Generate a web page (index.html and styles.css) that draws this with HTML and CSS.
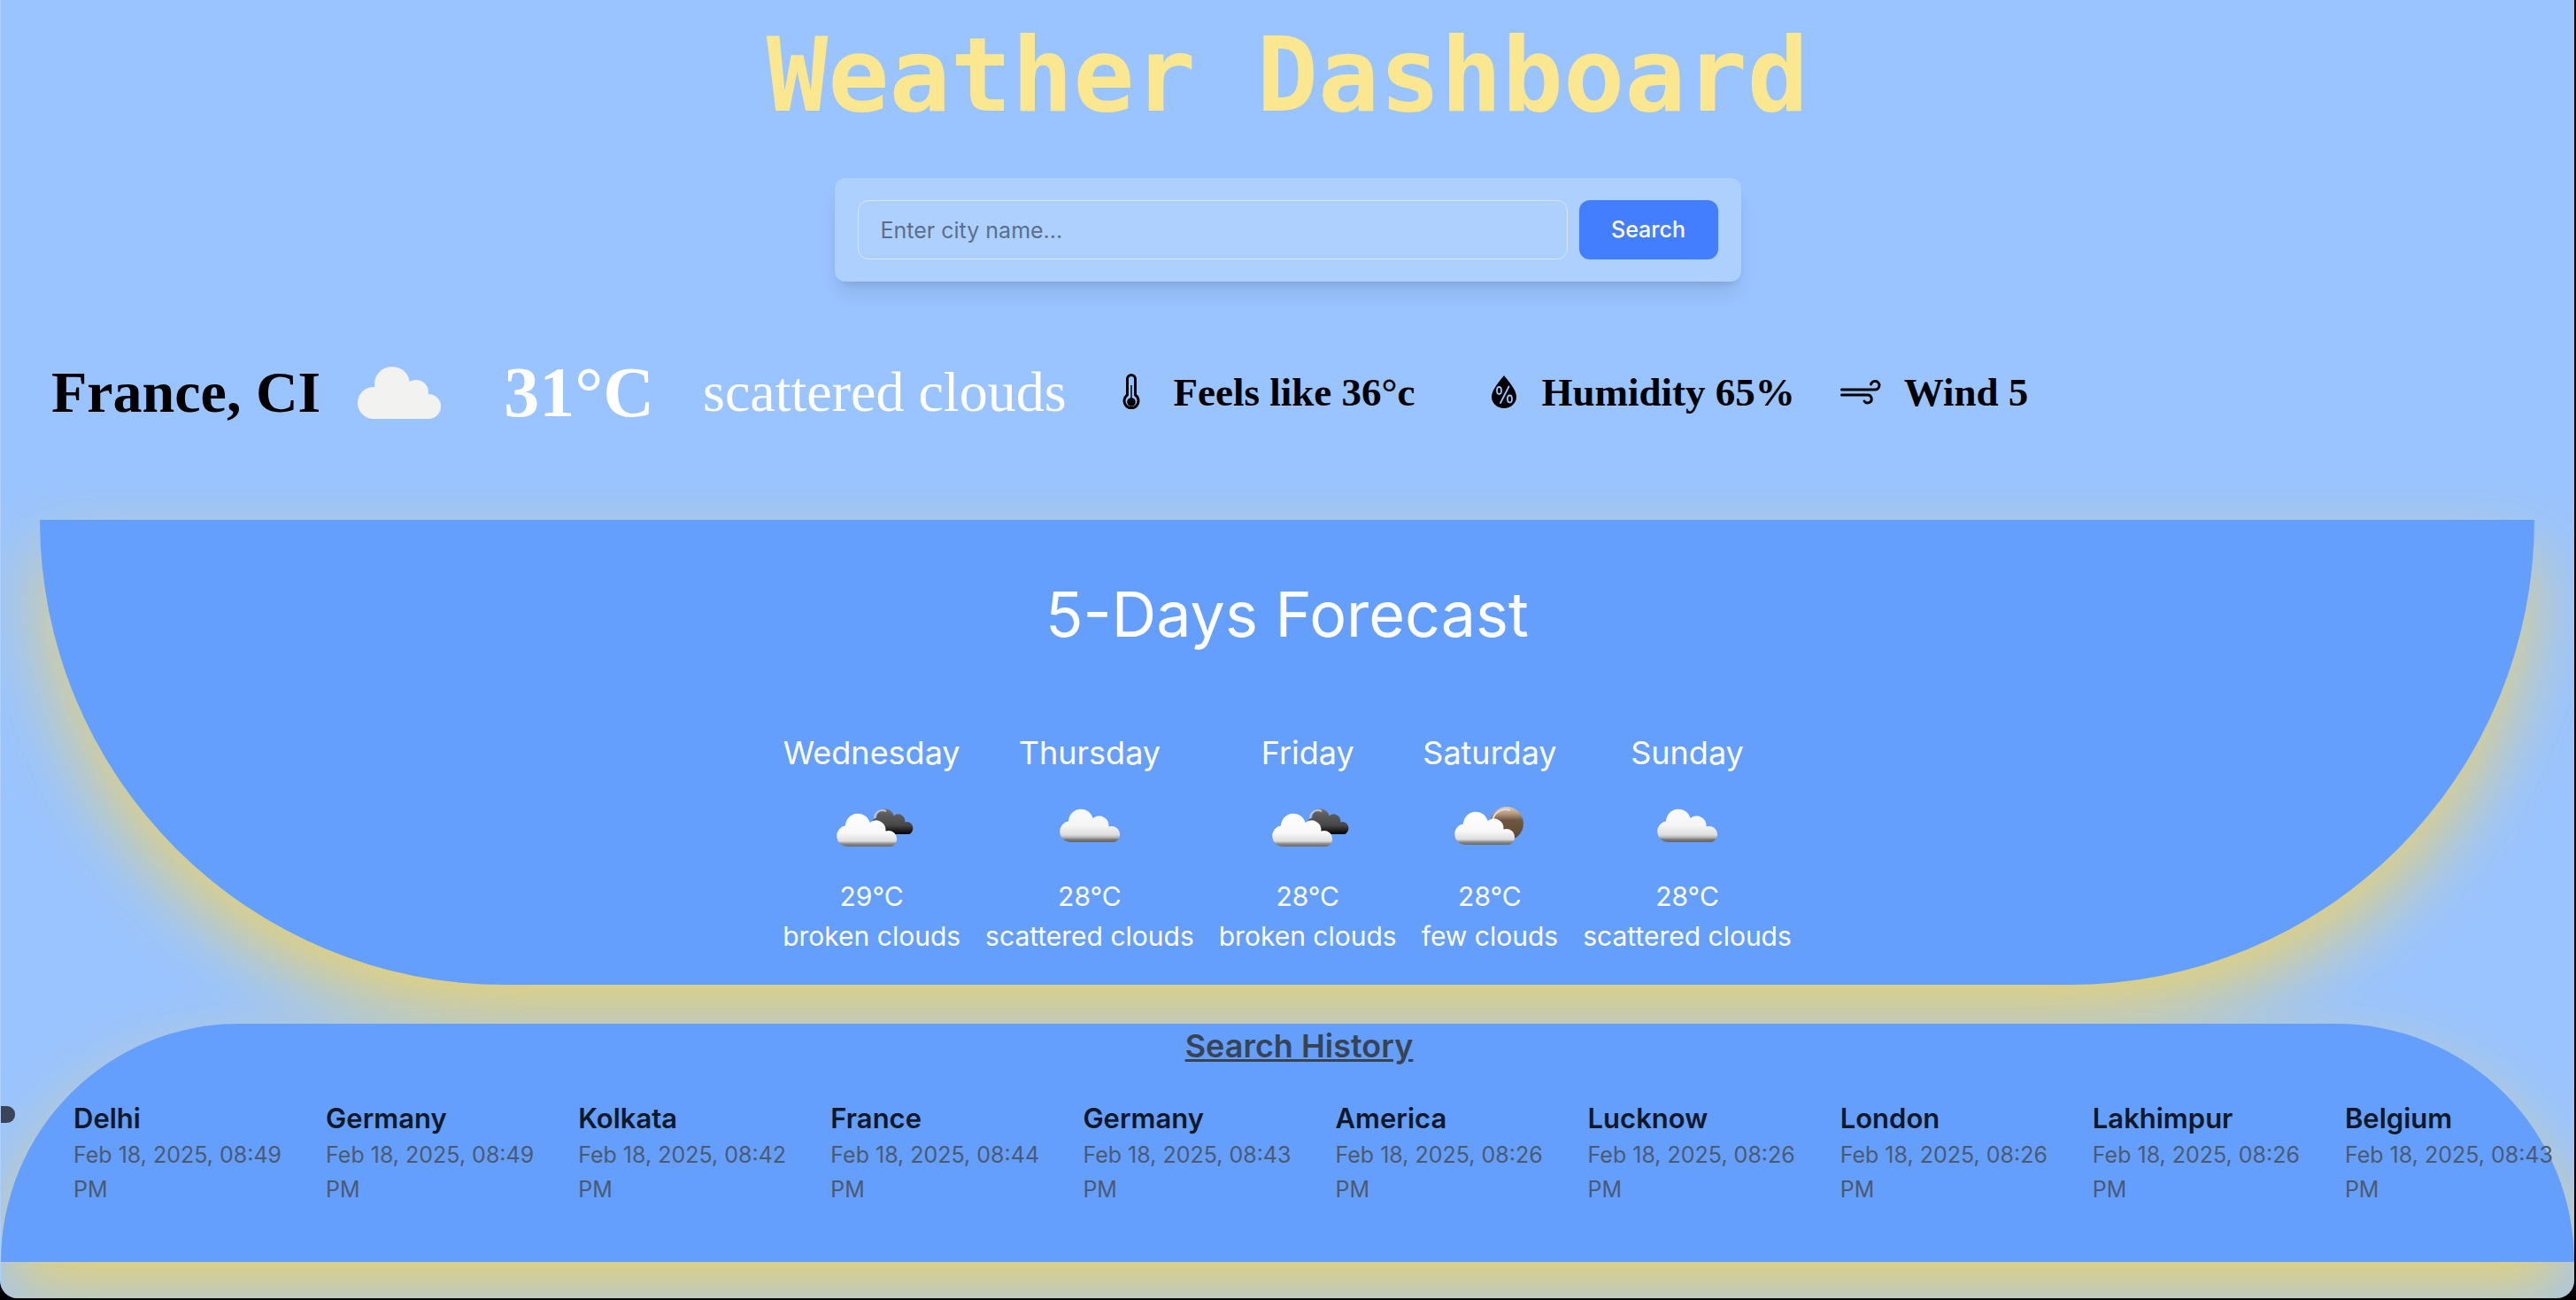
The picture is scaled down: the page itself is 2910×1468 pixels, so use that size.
FILE: index.html
```html
<!DOCTYPE html>
<html lang="en">
<head>
<meta charset="utf-8">
<title>Weather Dashboard</title>
<meta name="viewport" content="width=device-width, initial-scale=1">
<link rel="stylesheet" href="styles.css">
</head>
<body>
<svg class="defs" aria-hidden="true">
  <defs>
    <linearGradient id="lightFill" gradientUnits="userSpaceOnUse" x1="0" y1="0" x2="0" y2="38">
      <stop offset="0" stop-color="#fafafa"/>
      <stop offset=".5" stop-color="#f6f6f6"/>
      <stop offset=".78" stop-color="#dedede"/>
      <stop offset=".87" stop-color="#b0b0b0"/>
      <stop offset=".92" stop-color="#777"/>
      <stop offset="1" stop-color="#666"/>
    </linearGradient>
    <linearGradient id="whiteFill" gradientUnits="userSpaceOnUse" x1="0" y1="0" x2="0" y2="38">
      <stop offset="0" stop-color="#fff"/>
      <stop offset=".6" stop-color="#f8f8f8"/>
      <stop offset=".84" stop-color="#dcdcdc"/>
      <stop offset=".92" stop-color="#888"/>
      <stop offset="1" stop-color="#6a6a6a"/>
    </linearGradient>
    <linearGradient id="darkFill" gradientUnits="userSpaceOnUse" x1="0" y1="0" x2="0" y2="38">
      <stop offset="0" stop-color="#777"/>
      <stop offset=".25" stop-color="#5a5a5a"/>
      <stop offset=".65" stop-color="#484848"/>
      <stop offset="1" stop-color="#000"/>
    </linearGradient>
    <linearGradient id="sunFill" x1="0" y1="0" x2="0" y2="1">
      <stop offset="0" stop-color="#d8ccc0"/>
      <stop offset=".2" stop-color="#b89a80"/>
      <stop offset=".4" stop-color="#6e573f"/>
      <stop offset="1" stop-color="#5c4630"/>
    </linearGradient>
    <path id="cloud" d="M12 38a12 12 0 0 1-2-23.800A14 14 0 0 1 37.500 11A11 11 0 0 1 55.500 20.500A9.300 9.300 0 0 1 62 38Z"/>
    <symbol id="scattered" viewBox="0 0 96 60">
      <use href="#cloud" x="14" y="7" fill="url(#lightFill)"/>
    </symbol>
    <symbol id="broken" viewBox="0 0 96 60">
      <g transform="translate(46 7) scale(.71 .76)"><use href="#cloud" fill="url(#darkFill)"/></g>
      <path d="M51 18a9 9 0 0 1 13-8" fill="none" stroke="#c4c4c4" stroke-width="2"/>
      <use href="#cloud" x="8" y="12" fill="url(#whiteFill)"/>
    </symbol>
    <symbol id="few" viewBox="0 0 96 60">
      <circle cx="67" cy="24" r="19" fill="url(#sunFill)"/>
      <path d="M51 21a15 15 0 0 1 20-12" fill="none" stroke="#e4dcd4" stroke-width="2"/>
      <use href="#cloud" x="8" y="10" fill="url(#whiteFill)"/>
    </symbol>
  </defs>
</svg>

<main class="app">
  <h1 class="title">Weather Dashboard</h1>

  <form class="search">
    <input class="search-input" type="text" placeholder="Enter city name..." aria-label="City name">
    <button class="search-button" type="button">Search</button>
  </form>

  <section class="current" aria-label="Current weather">
    <h2 class="place">France, CI</h2>
    <svg class="current-icon" viewBox="0 0 160 96" aria-hidden="true">
      <g fill="#f2f2f0" transform="translate(33 19)">
        <circle cx="39" cy="20" r="20"/><circle cx="66" cy="29" r="14"/><circle cx="80" cy="45" r="14"/><circle cx="18" cy="41" r="18"/>
        <path d="M18 59V36L39 20L66 20L80 40V59Z"/>
      </g>
    </svg>
    <p class="temperature">31°C</p>
    <p class="condition">scattered clouds</p>
    <div class="metric feels-like">
      <svg class="metric-icon" viewBox="0 0 44 44" aria-hidden="true">
        <path d="M17.500 25V7a4.500 4.500 0 0 1 9 0v18a8 8 0 1 1-9 0Z" fill="none" stroke="#000" stroke-width="3"/>
        <circle cx="22" cy="33" r="4.800"/><path d="M22 14V30" stroke="#000" stroke-width="1.500"/>
      </svg>
      <p>Feels like 36°c</p>
    </div>
    <div class="metric">
      <svg class="metric-icon" viewBox="-5 0 44 44" aria-hidden="true">
        <path d="M22 3C26 8 36 19 36 27a14 13 0 0 1-28 0C8 19 18 8 22 3Z"/>
        <g fill="none" stroke="#9ac4ff" stroke-width="1.800"><ellipse cx="16.500" cy="20" rx="2.500" ry="4"/><ellipse cx="28.500" cy="29.500" rx="2.500" ry="4"/><path d="M27.500 15.500L18 34" stroke-linecap="round"/></g>
      </svg>
      <p>Humidity 65%</p>
    </div>
    <div class="metric">
      <svg class="metric-icon wide" viewBox="0 0 46 44" aria-hidden="true">
        <path d="M1.500 19H39a4.800 4.800 0 1 0-4.500-6M1.500 25H30a4.500 4.500 0 1 1-3 7" fill="none" stroke="#000" stroke-width="3" stroke-linecap="round"/>
      </svg>
      <p>Wind 5</p>
    </div>
  </section>

  <section class="forecast">
    <h2 class="forecast-title">5-Days Forecast</h2>
    <div class="days">
      <article class="day"><h3>Wednesday</h3><svg class="day-icon" aria-hidden="true"><use href="#broken"/></svg><p>29°C</p><p>broken clouds</p></article>
      <article class="day"><h3>Thursday</h3><svg class="day-icon" aria-hidden="true"><use href="#scattered"/></svg><p>28°C</p><p>scattered clouds</p></article>
      <article class="day"><h3>Friday</h3><svg class="day-icon" aria-hidden="true"><use href="#broken"/></svg><p>28°C</p><p>broken clouds</p></article>
      <article class="day"><h3>Saturday</h3><svg class="day-icon" aria-hidden="true"><use href="#few"/></svg><p>28°C</p><p>few clouds</p></article>
      <article class="day"><h3>Sunday</h3><svg class="day-icon" aria-hidden="true"><use href="#scattered"/></svg><p>28°C</p><p>scattered clouds</p></article>
    </div>
  </section>

  <section class="history">
    <span class="marker"></span>
    <h2 class="history-title">Search History</h2>
    <ul class="history-list">
      <li><h3>Delhi</h3><p>Feb 18, 2025, 08:49 PM</p></li>
      <li><h3>Germany</h3><p>Feb 18, 2025, 08:49 PM</p></li>
      <li><h3>Kolkata</h3><p>Feb 18, 2025, 08:42 PM</p></li>
      <li><h3>France</h3><p>Feb 18, 2025, 08:44 PM</p></li>
      <li><h3>Germany</h3><p>Feb 18, 2025, 08:43 PM</p></li>
      <li><h3>America</h3><p>Feb 18, 2025, 08:26 PM</p></li>
      <li><h3>Lucknow</h3><p>Feb 18, 2025, 08:26 PM</p></li>
      <li><h3>London</h3><p>Feb 18, 2025, 08:26 PM</p></li>
      <li><h3>Lakhimpur</h3><p>Feb 18, 2025, 08:26 PM</p></li>
      <li><h3>Belgium</h3><p>Feb 18, 2025, 08:43 PM</p></li>
    </ul>
  </section>
</main>
</body>
</html>
```
FILE: styles.css
```css
* {
  box-sizing: border-box;
  margin: 0;
  padding: 0;
}

body {
  background: #000;
  font-family: Inter, "Liberation Sans", sans-serif;
  font-size: 25px;
  line-height: 39px;
}

.defs {
  position: absolute;
  width: 0;
  height: 0;
}

.app {
  display: flow-root;
  min-height: calc(100vh - 2px);
  margin: 0 2px 2px 0;
  overflow: hidden;
  border-left: 1px solid #aed0ff;
  border-radius: 0 0 20px 20px;
  background: #9ac4ff;
}

.title {
  margin-top: 28px;
  text-align: center;
  font: bold 115px/115px "DejaVu Sans Mono", monospace;
  color: #fbe78f;
}

.search {
  display: flex;
  gap: 13px;
  max-width: 1024px;
  margin: 58px auto 0;
  padding: 25px 26px;
  border-radius: 12px;
  background: #aed0ff;
  box-shadow: 0 16px 24px -5px rgba(0, 0, 0, 0.1), 0 6px 10px -6px rgba(0, 0, 0, 0.14);
}

.search-input {
  flex: 1;
  min-width: 0;
  height: 67px;
  padding: 0 25px;
  border: 1px solid #dce4ee;
  border-radius: 12px;
  background: transparent;
  font: inherit;
  color: #111827;
}

.search-input::placeholder {
  color: #5b6f8c;
  opacity: 1;
}

.search-button {
  width: 157px;
  border: 0;
  border-radius: 12px;
  background: #437eff;
  font: inherit;
  font-weight: 500;
  color: #fff;
}

.current {
  display: flex;
  align-items: center;
  height: 96px;
  margin: 77px 0 96px;
  padding-left: 57px;
  font-family: Georgia, "Liberation Serif", serif;
  white-space: nowrap;
}

.place {
  font-size: 66px;
  line-height: 96px;
}

.current-icon {
  flex: none;
  width: 160px;
  height: 96px;
  margin: 0 38px 0 9px;
}

.temperature {
  margin-right: 55px;
  font-size: 80px;
  font-weight: bold;
  line-height: 96px;
  color: #fff;
}

.condition {
  font-size: 64px;
  line-height: 96px;
  color: #fff;
}

.metric {
  display: flex;
  align-items: center;
  gap: 26px;
  margin-left: 51px;
  font-size: 45px;
  font-weight: bold;
  line-height: 64px;
}

.feels-like {
  min-width: 365px;
}

.metric-icon {
  flex: none;
  width: 44px;
  height: 44px;
}

.wide {
  width: 46px;
}

.forecast {
  margin: 0 45px 44px 44px;
  padding: 68px 0 32px;
  border-radius: 0 0 9999px 9999px;
  background: #649ffd;
  box-shadow: 0 40px 80px #e5d178;
  text-align: center;
  color: #fff;
}

.forecast-title {
  margin-bottom: 93px;
  font-size: 70px;
  font-weight: 400;
  line-height: 77px;
}

.days {
  display: flex;
  justify-content: center;
  gap: 28px;
  font-size: 30px;
  line-height: 45px;
}

.day h3 {
  font-size: 36px;
  font-weight: 400;
  line-height: 51px;
}

.day-icon {
  display: block;
  width: 96px;
  height: 60px;
  margin: 30px auto 24px;
}

.history {
  position: relative;
  padding-bottom: 62px;
  border-radius: 9999px 9999px 0 0;
  background: #649ffd;
  box-shadow: 0 40px 80px #e5d178;
}

.marker {
  position: absolute;
  top: 93px;
  left: -2px;
  width: 18px;
  height: 19px;
  border-radius: 0 9px 9px 0;
  background: #3b4557;
}

.history-title {
  padding-left: 26px;
  text-align: center;
  font-size: 36px;
  font-weight: 600;
  line-height: 51px;
  color: #384353;
  text-decoration: underline;
}

.history-list {
  display: grid;
  grid-template-columns: repeat(10, 1fr);
  margin: 33px -26px 0 82px;
  list-style: none;
  color: #4b5a70;
}

.history-list li {
  padding-right: 38px;
}

.history-list h3 {
  font-size: 31px;
  font-weight: 600;
  line-height: 45px;
  color: #111827;
}
```
